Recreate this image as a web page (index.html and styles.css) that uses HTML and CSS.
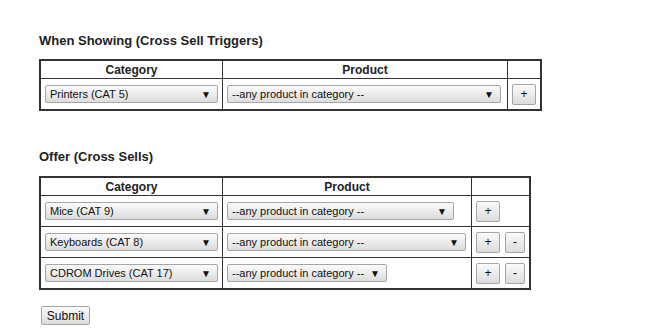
FILE: index.html
```html
<!DOCTYPE html>
<html lang="en">
<head>
    <meta charset="UTF-8">
    <title>Cross Sell</title>
    <link rel="stylesheet" href="styles.css">
</head>
<body>
    <div class="page">
        <h2>When Showing (Cross Sell Triggers)</h2>
        <table class="xsell triggers">
            <tr>
                <th class="col-cat">Category</th>
                <th class="col-prod">Product</th>
                <th class="col-act"></th>
            </tr>
            <tr>
                <td><div class="select sel-cat"><span>Printers (CAT 5)</span><i>&#9660;</i></div></td>
                <td><div class="select sel-prod-wide"><span>--any product in category --</span><i>&#9660;</i></div></td>
                <td><button class="btn">+</button></td>
            </tr>
        </table>

        <h2 class="second">Offer (Cross Sells)</h2>
        <table class="xsell offers">
            <tr>
                <th class="col-cat">Category</th>
                <th class="col-prod">Product</th>
                <th class="col-act"></th>
            </tr>
            <tr>
                <td><div class="select sel-cat"><span>Mice (CAT 9)</span><i>&#9660;</i></div></td>
                <td><div class="select sel-prod-a"><span>--any product in category --</span><i>&#9660;</i></div></td>
                <td><button class="btn">+</button></td>
            </tr>
            <tr>
                <td><div class="select sel-cat"><span>Keyboards (CAT 8)</span><i>&#9660;</i></div></td>
                <td><div class="select sel-prod-b"><span>--any product in category --</span><i>&#9660;</i></div></td>
                <td><button class="btn">+</button><button class="btn minus">-</button></td>
            </tr>
            <tr>
                <td><div class="select sel-cat"><span>CDROM Drives (CAT 17)</span><i>&#9660;</i></div></td>
                <td><div class="select sel-prod-c"><span>--any product in category --</span><i>&#9660;</i></div></td>
                <td><button class="btn">+</button><button class="btn minus">-</button></td>
            </tr>
        </table>

        <button class="submit">Submit</button>
    </div>
</body>
</html>
```

FILE: styles.css
```css
body {
    margin: 0;
    background-color: #fff;
    color: #222;
    font-family: "Liberation Sans", Arial, sans-serif;
}
.page {
    padding: 33px 0 0 39px;
}
h2 {
    font-family: "Liberation Sans", Arial, sans-serif;
    font-size: 13px;
    line-height: 15px;
    font-weight: bold;
    color: #222;
    margin: 0 0 11px 0;
}
h2.second {
    margin-top: 38px;
    margin-bottom: 12px;
}
.xsell {
    border-collapse: collapse;
    border: 2px solid #333;
}
.xsell th,
.xsell td {
    border: 1px solid #333;
}
.xsell th {
    font-size: 12px;
    font-weight: bold;
    height: 17px;
    padding: 0;
    color: #222;
}
.xsell td {
    padding: 4px;
    height: 22px;
    white-space: nowrap;
}
.col-cat { width: 181px; }
.triggers .col-prod { width: 284px; }
.triggers .col-act { width: 31px; }
.offers .col-prod { width: 248px; }
.offers .col-act { width: 57px; }

.select {
    display: inline-flex;
    align-items: center;
    justify-content: space-between;
    height: 16px;
    box-sizing: content-box;
    border: 1px solid #a6a6a6;
    border-radius: 2px;
    background: linear-gradient(#fbfbfb, #dcdcdc);
    font-size: 11px;
    color: #111;
    padding: 0 6px 0 4px;
    vertical-align: middle;
}
.select i {
    font-style: normal;
    font-size: 10px;
    color: #111;
}
.sel-cat { width: 161px; }
.sel-prod-wide { width: 262px; }
.sel-prod-a { width: 215px; }
.sel-prod-b { width: 227px; }
.sel-prod-c { width: 148px; }

.btn {
    width: 24px;
    height: 21px;
    padding: 0;
    border: 1px solid #a6a6a6;
    border-radius: 2px;
    background: linear-gradient(#fbfbfb, #dcdcdc);
    font-family: "Liberation Sans", Arial, sans-serif;
    font-size: 12px;
    color: #111;
    vertical-align: middle;
}
.btn.minus {
    width: 20px;
    margin-left: 5px;
}
.submit {
    margin: 16px 0 0 2px;
    width: 49px;
    height: 19px;
    padding: 0;
    border: 1px solid #a6a6a6;
    border-radius: 2px;
    background: linear-gradient(#fbfbfb, #dcdcdc);
    font-family: "Liberation Sans", Arial, sans-serif;
    font-size: 12px;
    color: #111;
}
```
